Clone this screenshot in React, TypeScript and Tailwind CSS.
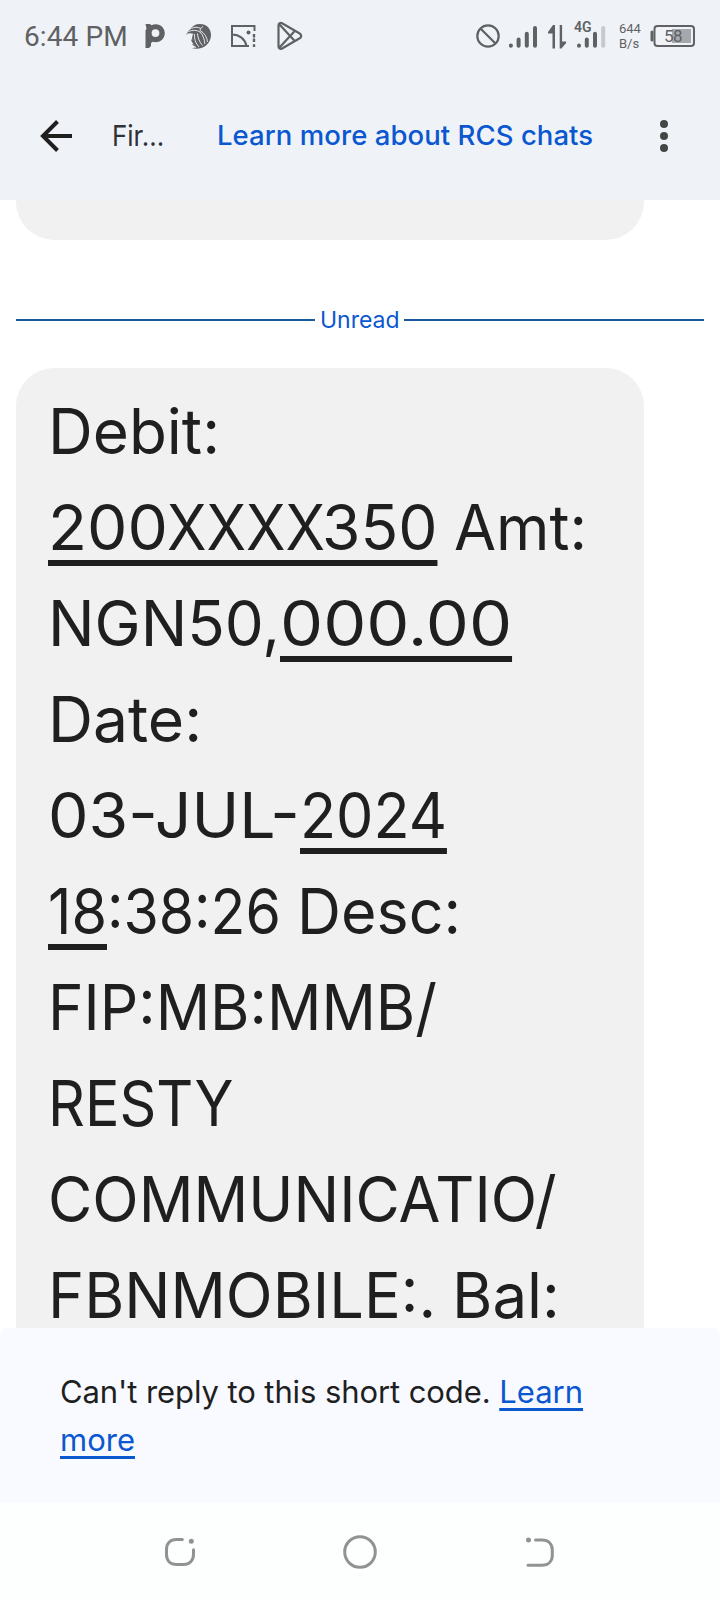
import type { ReactNode } from "react";

function Word({ box, fit, linked, children }: { box: string; fit: string; linked?: boolean; children: ReactNode }) {
  return (
    <span className={`block shrink-0 ${box}`}>
      <span
        className={`inline-block origin-left ${fit} ${
          linked ? "underline decoration-[5.5px] underline-offset-[10px] [text-decoration-skip-ink:none]" : ""
        }`}
      >
        {children}
      </span>
    </span>
  );
}

function Line({ children }: { children: ReactNode }) {
  return <div className="flex h-24 whitespace-nowrap">{children}</div>;
}

function StatusBar() {
  return (
    <div className="flex h-[72px] items-start pt-5 font-['Roboto',sans-serif] text-[#5f6163]">
      <span className="ml-6 w-[121px] pt-px text-[28px] leading-8 font-[450] tracking-[0.1px] whitespace-nowrap">6:44 PM</span>
      <svg className="h-8 w-[22px]" viewBox="145 20 22 32" fill="currentColor">
        <path fillRule="evenodd" d="M145.500 24h4.500l1.500 1.300a9 9 0 1 1 1.500 16.500L151 43v3l-2 2h-3.500V30.500l1-2zM155.500 29.200a3.900 3.900 0 1 0 0 7.800 3.900 3.900 0 0 0 0-7.800z" />
      </svg>
      <svg className="ml-[19px] h-8 w-[26px]" viewBox="186 20 26 32" fill="none">
        <path fill="currentColor" d="M187 34.500c.3-2.500 1.500-4 3.200-5C192 26 195.500 24 200 24c6.500 0 11 4.500 11 11 0 7.500-6 13.500-13.500 13.700-2 .1-4-.1-6-.7 2 0 3.800-.2 5-.8-2-.7-3.600-1.800-4.600-3.200l2 .5c-1.600-1.500-2.600-3.200-3-5.500l1.400 1.300c-.5-2.300-.2-4.600 1-6.600-3-.9-6-.6-8.300.8z" />
        <path stroke="#eff3f8" strokeWidth=".9" d="M188.500 31.500c4-1.800 8.500-1.500 11.500.5M194.500 34c-.3 5 1 9 4.500 13M197.500 33.500c.3 4.500 2 8.500 5 12M191.500 28.500c3-1.800 6-1.500 9-.2l-.5 2.200c4.500 2.500 7 6.500 7.500 11.500M200 32c3 3 4.500 7 4.800 12M200.500 28.500l2.500-2" />
      </svg>
      <svg className="ml-[18px] h-8 w-[28px]" viewBox="230 20 28 32" fill="none" stroke="currentColor" strokeWidth="2">
        <path d="M254.500 31v-5H232v20h17M232 34.500c7.500 0 13 4.500 14.500 11.500" />
        <circle cx="248.500" cy="32.500" r="2" fill="currentColor" stroke="none" />
        <path strokeWidth="2.400" d="M254 34v3.500M254 38.500v3.500M254 44.300v2.700" />
      </svg>
      <svg className="ml-[18px] h-8 w-[28px]" viewBox="276 20 28 32" fill="none" stroke="currentColor" strokeWidth="2.200" strokeLinejoin="round">
        <path d="M278.500 25.500c0-2.200 1.800-3.200 3.600-2.200l17.600 10.200c2 1.200 2 3.600 0 4.800l-17.600 10.200c-1.800 1-3.600 0-3.600-2.200zM279.500 24.500l15 16.300M279.500 47.500l15-16.300" />
      </svg>
      <svg className="ml-[171px] h-8 w-[26px]" viewBox="475 20 26 32" fill="none" stroke="currentColor" strokeWidth="2.200">
        <circle cx="488" cy="36" r="10.700" />
        <path d="M480.500 28.500l15 15" />
      </svg>
      <svg className="ml-[7px] h-8 w-[30px]" viewBox="508 20 30 32" stroke="currentColor" strokeWidth="4" strokeLinecap="round">
        <path d="M510.900 45.600v.1M518.600 39.500v6.200M526.800 33.800v11.900M535 28v17.700" />
      </svg>
      <svg className="ml-[9px] h-8 w-[20px]" viewBox="547 20 20 32" fill="currentColor">
        <path d="M555 25v23.500h-2.500V33.500H548V32l5-7zM559.700 25h2.400v16.500h4V43l-4.600 5.500h-1.800z" />
      </svg>
      <div className="relative ml-[7px] h-8 w-8">
        <svg className="h-8 w-8" viewBox="574 20 32 32" stroke="currentColor" strokeWidth="4" strokeLinecap="round">
          <path d="M579 45.600v.1M586.800 39.500v6.200M595 33.800v11.900" />
          <path stroke="#c6c9cd" d="M603.200 28v17.700" />
        </svg>
        <span className="absolute -top-px left-0 text-[14px] leading-4 font-semibold">4G</span>
      </div>
      <div className="ml-[13px] w-[30px] text-[13px] leading-[15px]">
        <div className="pt-px">644</div>
        <div>B/s</div>
      </div>
      <div className="relative ml-px h-8 w-[46px]">
        <svg className="h-8 w-[46px]" viewBox="650 20 46 32" fill="none">
          <rect x="672" y="29" width="19" height="14" fill="#a5a9ad" />
          <rect x="654.500" y="26" width="39.500" height="20" rx="3" stroke="currentColor" strokeWidth="2" />
          <path d="M652 32v8" stroke="currentColor" strokeWidth="3" strokeLinecap="round" />
        </svg>
        <span className="absolute top-[6px] left-[14px] text-[17px] leading-5 tracking-[-0.5px]">58</span>
      </div>
    </div>
  );
}

function AppBar() {
  return (
    <div className="flex h-32 items-center">
      <svg className="ml-[39px] h-8 w-[34px]" viewBox="0 0 34 32" fill="none" stroke="#1f1f1f" strokeWidth="4">
        <path d="M33 16H4M18.500 1.500L4 16l14.500 14.500" />
      </svg>
      <span className="ml-[39px] w-[105px] text-[29px] text-[#303134]">
        <span className="inline-block origin-left scale-x-[0.895]">Fir...</span>
      </span>
      <span className="w-[442px] text-[27.5px] font-medium tracking-[0.06px] whitespace-nowrap text-[#0b57d0]">
        Learn more about RCS chats
      </span>
      <svg className="h-8 w-[10px]" viewBox="0 0 10 32" fill="#444746">
        <circle cx="5" cy="4" r="4" />
        <circle cx="5" cy="16" r="4" />
        <circle cx="5" cy="28" r="4" />
      </svg>
    </div>
  );
}

export default function App() {
  return (
    <div className="flex h-[1600px] w-[720px] flex-col overflow-hidden bg-white font-['Inter',sans-serif] text-[#1f1f1f]">
      <header className="h-[200px] shrink-0 bg-[#eff3f8]">
        <StatusBar />
        <AppBar />
      </header>

      <main className="h-[1128px] shrink-0 overflow-hidden px-4">
        <div className="h-10 w-[628px] rounded-b-[38px] bg-[#f1f1f1]" />
        <div className="mt-[60px] flex h-10 items-center">
          <div className="h-0.5 w-[299px] bg-[#185a9c]" />
          <span className="w-[89px] pl-[5px] text-[23px] leading-10 text-[#0b57d0]">Unread</span>
          <div className="h-0.5 flex-1 bg-[#185a9c]" />
        </div>
        <div className="mt-7 h-[1000px] w-[628px] rounded-t-[38px] bg-[#f1f1f1] pt-[15px] pl-8 text-[63px] leading-[96px]">
          <Line>
            <Word box="w-[172px]" fit="scale-x-[0.984]">Debit:</Word>
          </Line>
          <Line>
            <Word box="w-[119px]" fit="scale-x-[1.017]" linked>200</Word>
            <Word box="w-[155px]" fit="scale-x-[0.92]" linked>XXXX</Word>
            <Word box="w-[132px]" fit="scale-x-[0.987]" linked>350</Word>
            <Word box="w-[133px]" fit="scale-x-[0.968]">Amt:</Word>
          </Line>
          <Line>
            <Word box="w-[232px]" fit="scale-x-[0.981]">NGN50,</Word>
            <Word box="w-[232px]" fit="scale-x-[1.086]" linked>000.00</Word>
          </Line>
          <Line>
            <Word box="w-[154px]" fit="scale-x-[0.99]">Date:</Word>
          </Line>
          <Line>
            <Word box="w-[252px]" fit="scale-x-[1.02]">03-JUL-</Word>
            <Word box="w-[147px]" fit="scale-x-[0.94]" linked>2024</Word>
          </Line>
          <Line>
            <Word box="w-[59px]" fit="scale-x-[0.913]" linked>18</Word>
            <Word box="w-[190px]" fit="scale-x-[0.907]">:38:26</Word>
            <Word box="w-[165px]" fit="scale-x-[0.967]">Desc:</Word>
          </Line>
          <Line>
            <Word box="w-[390px]" fit="scale-x-[0.957]">FIP:MB:MMB/</Word>
          </Line>
          <Line>
            <Word box="w-[185px]" fit="scale-x-[0.911]">RESTY</Word>
          </Line>
          <Line>
            <Word box="w-[508px]" fit="scale-x-[0.963]">COMMUNICATIO/</Word>
          </Line>
          <Line>
            <Word box="w-[404px]" fit="scale-x-[0.973]">FBNMOBILE:.</Word>
            <Word box="w-[110px]" fit="scale-x-[0.98]">Bal:</Word>
          </Line>
        </div>
      </main>

      <section className="h-[175px] shrink-0 rounded-t-lg bg-[#f8faff] pt-10 pl-[60px] text-[31px] leading-[48px]">
        <p className="w-[560px]">
          <span className="tracking-[-0.09px]">Can't reply to this short code.</span>{" "}
          <a className="text-[#0b57d0] underline decoration-[3px] underline-offset-[5px] [text-decoration-skip-ink:none]">
            Learn more
          </a>
        </p>
      </section>

      <nav className="flex flex-1 items-center bg-[#fdfefe] pt-px">
        <svg className="ml-[164px] h-9 w-8" viewBox="164 1534 32 36" fill="none" stroke="#929292" strokeWidth="3" strokeLinecap="round">
          <path d="M182.300 1539.500h-5.800c-6.500 0-10 4-10 10v5c0 6.500 4 10 10 10h7c6 0 10-4 10-10v-4.800" />
          <circle cx="191.300" cy="1541.300" r="2.500" fill="#929292" stroke="none" />
        </svg>
        <svg className="ml-[146px] h-9 w-9" viewBox="342 1534 36 36" fill="none" stroke="#929292" strokeWidth="3">
          <circle cx="360" cy="1552" r="15.300" />
        </svg>
        <svg className="ml-[147px] h-9 w-[30px]" viewBox="525 1534 30 36" fill="none" stroke="#929292" strokeWidth="3" strokeLinecap="round">
          <path d="M535.500 1540h6.500c6.500 0 10.300 4 10.300 10v5.300c0 6-4 10-10.300 10h-14" />
          <circle cx="528.500" cy="1540" r="2.500" fill="#929292" stroke="none" />
        </svg>
      </nav>
    </div>
  );
}
